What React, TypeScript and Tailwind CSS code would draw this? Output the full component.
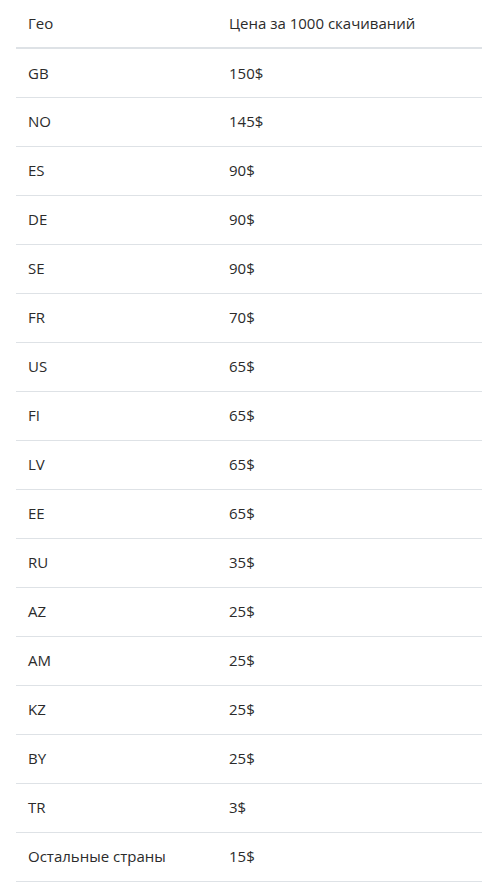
const rows: [string, string][] = [
  ["GB", "150$"],
  ["NO", "145$"],
  ["ES", "90$"],
  ["DE", "90$"],
  ["SE", "90$"],
  ["FR", "70$"],
  ["US", "65$"],
  ["FI", "65$"],
  ["LV", "65$"],
  ["EE", "65$"],
  ["RU", "35$"],
  ["AZ", "25$"],
  ["AM", "25$"],
  ["KZ", "25$"],
  ["BY", "25$"],
  ["TR", "3$"],
  ["Остальные страны", "15$"],
];

export default function App() {
  return (
    <div className="min-h-[888px] bg-white px-4 font-['Open_Sans',sans-serif] text-[15px] text-[#2b2b2b]">
      <table className="w-[466px] border-collapse">
        <thead>
          <tr className="h-[48px] border-b-2 border-[#dee2e6]">
            <th className="w-[201px] px-3 text-left font-normal">Гео</th>
            <th className="px-3 text-left font-normal">Цена за 1000 скачиваний</th>
          </tr>
        </thead>
        <tbody>
          {rows.map(([geo, price]) => (
            <tr key={geo} className="h-[49px] border-b border-[#dee2e6]">
              <td className="px-3">{geo}</td>
              <td className="px-3">{price}</td>
            </tr>
          ))}
        </tbody>
      </table>
    </div>
  );
}
